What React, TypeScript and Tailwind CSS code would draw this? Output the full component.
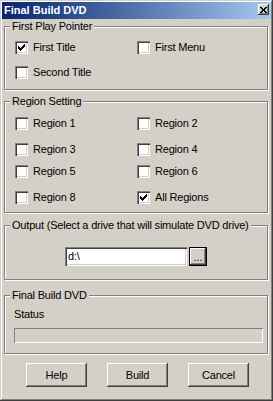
import React from 'react';

const CheckBox: React.FC<{ checked?: boolean }> = ({ checked }) => (
  <span className="w-[13px] h-[13px] shrink-0 bg-white flex items-center justify-center shadow-[inset_1px_1px_#808080,inset_2px_2px_#404040,inset_-1px_-1px_#fff,inset_-2px_-2px_#d4d0c8]">
    {checked && (
      <svg width="7" height="7" viewBox="0 0 7 7" shapeRendering="crispEdges">
        <path
          fill="#000"
          d="M6 0h1v1h-1z M5 1h2v1h-2z M0 2h1v1h-1z M4 2h3v1h-3z M0 3h2v1h-2z M3 3h3v1h-3z M0 4h5v1h-5z M1 5h3v1h-3z M2 6h1v1h-1z"
        />
      </svg>
    )}
  </span>
);

const Option: React.FC<{ label: string; checked?: boolean }> = ({ label, checked }) => (
  <div className="flex items-center gap-[5px] h-[13px]">
    <CheckBox checked={checked} />
    <span className="leading-[13px] whitespace-nowrap">{label}</span>
  </div>
);

const Group: React.FC<{ title: string; className: string; children?: React.ReactNode }> = ({ title, className, children }) => (
  <div className={`mx-[2px] w-[264px] border border-[#808080] shadow-[inset_1px_1px_#fff,1px_1px_#fff] ${className}`}>
    <div className="-mt-[7px] ml-[5px] w-fit px-[2px] h-[13px] leading-[13px] bg-[#d4d0c8] whitespace-nowrap">{title}</div>
    {children}
  </div>
);

const WinButton: React.FC<{ label: string }> = ({ label }) => (
  <button className="w-[61px] h-[24px] bg-[#d4d0c8] text-black leading-[13px] shadow-[inset_-1px_-1px_#404040,inset_1px_1px_#fff,inset_-2px_-2px_#808080]">
    {label}
  </button>
);

export default function App() {
  return (
    <div className="w-[273px] h-[401px] bg-[#d4d0c8] p-[2px] flex flex-col text-[11px] tracking-[-0.2px] text-black font-['Liberation_Sans',Arial,sans-serif] shadow-[inset_-1px_-1px_#404040,inset_1px_1px_#d4d0c8,inset_-2px_-2px_#808080,inset_2px_2px_#fff]">
      {/* caption */}
      <div className="h-[17px] shrink-0 flex items-start justify-between bg-linear-to-r from-[#0a246a] to-[#a6caf0]">
        <span className="pl-[2px] h-[17px] leading-[17px] font-bold text-white tracking-normal">Final Build DVD</span>
        <button className="mt-[2px] mr-[2px] w-[11px] h-[11px] bg-[#d4d0c8] flex items-center justify-center shadow-[inset_-1px_-1px_#404040,inset_1px_1px_#fff,inset_-2px_-2px_#808080]">
          <svg width="7" height="6" viewBox="0 0 7 6" shapeRendering="crispEdges">
            <path
              fill="#000"
              d="M0 0h2v1H0z M5 0h2v1H5z M1 1h2v1H1z M4 1h2v1H4z M2 2h3v1H2z M2 3h3v1H2z M1 4h2v1H1z M4 4h2v1H4z M0 5h2v1H0z M5 5h2v1H5z"
            />
          </svg>
        </button>
      </div>

      <Group title="First Play Pointer" className="mt-[7px] h-[64px]">
        <div className="grid grid-cols-[122px_1fr] gap-y-[12px] mt-[8px] ml-[10px]">
          <Option label="First Title" checked />
          <Option label="First Menu" />
          <Option label="Second Title" />
        </div>
      </Group>

      <Group title="Region Setting" className="mt-[11px] h-[112px]">
        <div className="flex flex-col ml-[10px]">
          <div className="grid grid-cols-[122px_1fr] mt-[9px]">
            <Option label="Region 1" />
            <Option label="Region 2" />
          </div>
          <div className="grid grid-cols-[122px_1fr] mt-[13px]">
            <Option label="Region 3" />
            <Option label="Region 4" />
          </div>
          <div className="grid grid-cols-[122px_1fr] mt-[9px]">
            <Option label="Region 5" />
            <Option label="Region 6" />
          </div>
          <div className="grid grid-cols-[122px_1fr] mt-[13px]">
            <Option label="Region 8" />
            <Option label="All Regions" checked />
          </div>
        </div>
      </Group>

      <Group title="Output (Select a drive that will simulate DVD drive)" className="mt-[12px] h-[55px]">
        <div className="flex justify-center gap-[2px] mt-[15px]">
          <input
            readOnly
            value={'d:\\'}
            className="w-[122px] h-[19px] bg-white pl-[3px] outline-none leading-[19px] shadow-[inset_1px_1px_#808080,inset_2px_2px_#404040,inset_-1px_-1px_#fff,inset_-2px_-2px_#d4d0c8]"
          />
          <button className="w-[18px] h-[19px] border border-black bg-[#d4d0c8] leading-[13px] pt-[1px] tracking-normal shadow-[inset_-1px_-1px_#404040,inset_1px_1px_#fff,inset_-2px_-2px_#808080]">
            ...
          </button>
        </div>
      </Group>

      <Group title="Final Build DVD" className="mt-[15px] h-[59px]">
        <div className="ml-[9px] mt-[6px] h-[13px] leading-[13px]">Status</div>
        <div className="ml-[9px] mt-[7px] w-[249px] h-[15px] shadow-[inset_1px_1px_#808080,inset_-1px_-1px_#fff]" />
      </Group>

      <div className="flex gap-[20px] mt-[9px] pl-[24px]">
        <WinButton label="Help" />
        <WinButton label="Build" />
        <WinButton label="Cancel" />
      </div>
    </div>
  );
}
